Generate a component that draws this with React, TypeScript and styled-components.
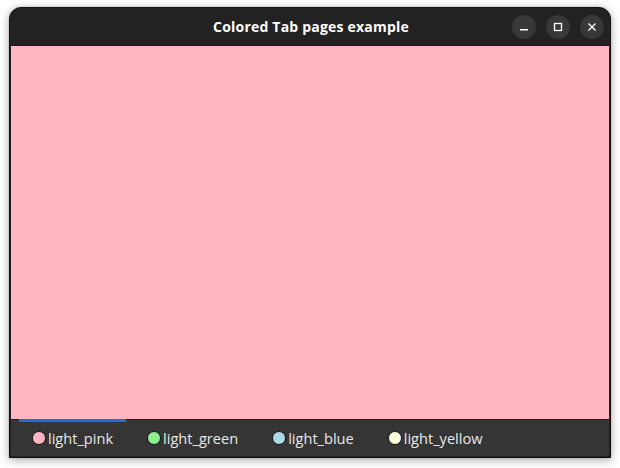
import React from "react";
import styled, { createGlobalStyle } from "styled-components";

const Global = createGlobalStyle`
  html, body { margin: 0; padding: 0; background: #ffffff; }
  body { width: 620px; height: 468px; overflow: hidden; }
`;

const Page = styled.div`
  width: 620px;
  height: 468px;
  padding: 7px 9px 10px 9px;
  box-sizing: border-box;
`;

const Window = styled.div`
  width: 602px;
  height: 451px;
  box-sizing: border-box;
  background: #222222;
  border: 1px solid #141414;
  border-radius: 12px 12px 0 0;
  box-shadow: 0 2px 10px rgba(0, 0, 0, 0.35), 0 0 0 1px rgba(0, 0, 0, 0.06);
  display: flex;
  flex-direction: column;
  overflow: hidden;
`;

const TitleBar = styled.div`
  height: 37px;
  flex: none;
  display: grid;
  grid-template-columns: 1fr auto 1fr;
  align-items: center;
  padding: 0 6px 0 8px;
`;

const Title = styled.div`
  grid-column: 2;
  color: #ffffff;
  font-family: "Open Sans", "Noto Sans", sans-serif;
  font-weight: 700;
  font-size: 14px;
  letter-spacing: 0.2px;
`;

const Controls = styled.div`
  grid-column: 3;
  justify-self: end;
  display: flex;
  gap: 10px;
  margin-right: 0;
  margin-top: 1px;
`;

const CtrlButton = styled.div`
  width: 24px;
  height: 24px;
  border-radius: 50%;
  background: #383838;
  display: flex;
  align-items: center;
  justify-content: center;
`;

const Body = styled.div`
  flex: 1;
  display: flex;
  flex-direction: column;
  margin: 0 1px 1px 1px;
  border-top: 1px solid #1a1a1a;
`;

const Pane = styled.div<{ $bg: string }>`
  flex: 1;
  background: ${(p) => p.$bg};
`;

const TabBar = styled.div`
  height: 36px;
  flex: none;
  background: #353535;
  border-top: 1px solid #222222;
  display: flex;
  gap: 8px;
  padding-left: 8px;
`;

const Tab = styled.div<{ $active?: boolean }>`
  display: flex;
  align-items: center;
  padding: 0 13px 3px 13px;
  border-top: 3px solid ${(p) => (p.$active ? "#1c71d8" : "transparent")};
  margin-top: -1px;
  color: #e8e8e8;
  font-family: "Open Sans", "Noto Sans", sans-serif;
  font-size: 14.6px;
`;

const Dot = styled.span<{ $c: string }>`
  width: 14px;
  height: 14px;
  box-sizing: border-box;
  border-radius: 50%;
  background: ${(p) => p.$c};
  border: 1px solid #111111;
  margin-right: 2px;
  flex: none;
`;

const tabs = [
  { name: "light_pink", color: "#ffb6c1" },
  { name: "light_green", color: "#90ee90" },
  { name: "light_blue", color: "#add8e6" },
  { name: "light_yellow", color: "#ffffe0" },
];

export default function App() {
  return (
    <>
      <Global />
      <Page>
        <Window>
          <TitleBar>
            <Title>Colored Tab pages example</Title>
            <Controls>
              <CtrlButton>
                <svg width="10" height="10" viewBox="0 0 10 10">
                  <rect x="1" y="7" width="8" height="1.5" fill="#fff" />
                </svg>
              </CtrlButton>
              <CtrlButton>
                <svg width="10" height="10" viewBox="0 0 10 10">
                  <rect x="1.5" y="1.5" width="7" height="7" fill="none" stroke="#fff" strokeWidth="1.3" />
                </svg>
              </CtrlButton>
              <CtrlButton>
                <svg width="10" height="10" viewBox="0 0 10 10">
                  <path d="M1.5 1.5 L8.5 8.5 M8.5 1.5 L1.5 8.5" stroke="#fff" strokeWidth="1.4" />
                </svg>
              </CtrlButton>
            </Controls>
          </TitleBar>
          <Body>
            <Pane $bg="#ffb6c1" />
            <TabBar>
              {tabs.map((t, i) => (
                <Tab key={t.name} $active={i === 0}>
                  <Dot $c={t.color} />
                  {t.name}
                </Tab>
              ))}
            </TabBar>
          </Body>
        </Window>
      </Page>
    </>
  );
}
